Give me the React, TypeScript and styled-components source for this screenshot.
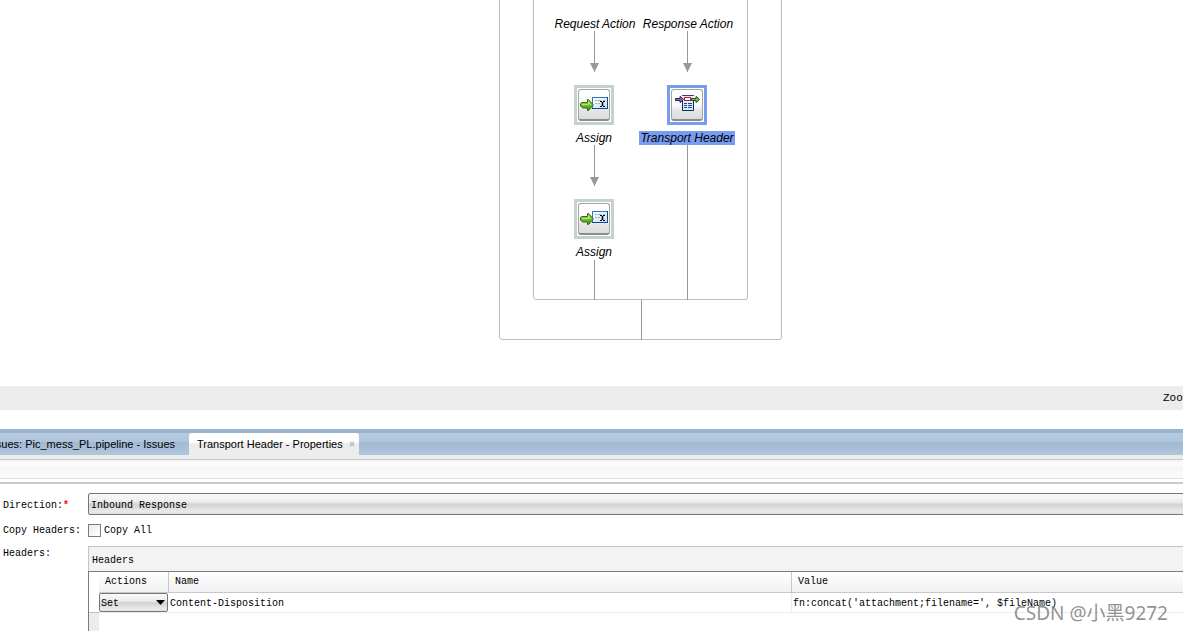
import React from "react";
import styled, { createGlobalStyle } from "styled-components";

const GlobalStyle = createGlobalStyle`
  * { box-sizing: border-box; }
  html, body { margin: 0; overflow: hidden; }
  body {
    background: #fff;
    color: #000;
    font: 10px/14px "Liberation Mono", "DejaVu Sans Mono", monospace;
  }
  input, select, button { font: inherit; color: inherit; margin: 0; }
`;

const Page = styled.div`
  display: flex;
  flex-direction: column;
  height: 100vh;
  min-height: 600px;
  overflow: hidden;
`;

/* Diagram */

const Canvas = styled.section`
  position: relative;
  flex: none;
  height: 386px;
  overflow: hidden;
`;

const Frame = styled.div<{ $x: number; $w: number; $h: number }>`
  position: absolute;
  top: -8px;
  left: ${(p) => p.$x}px;
  width: ${(p) => p.$w}px;
  height: ${(p) => p.$h + 8}px;
  border: 1px solid #bdbdbd;
  border-radius: 3px;
`;

const Connectors = styled.svg`
  position: absolute;
  top: 0;
  left: 0;
`;

const NodeLabel = styled.span<{ $x: number; $y: number; $selected?: boolean }>`
  position: absolute;
  left: ${(p) => p.$x}px;
  top: ${(p) => p.$y}px;
  transform: translateX(-50%);
  min-width: ${(p) => (p.$selected ? 96 : 0)}px;
  background: ${(p) => (p.$selected ? "#789cf0" : "transparent")};
  font: italic 12px/14px "Liberation Sans", Arial, sans-serif;
  text-align: center;
  white-space: nowrap;
`;

const NodeButton = styled.button<{ $x: number; $y: number; $selected?: boolean }>`
  position: absolute;
  left: ${(p) => p.$x}px;
  top: ${(p) => p.$y}px;
  width: 40px;
  height: 40px;
  padding: 1px;
  border: 3px solid ${(p) => (p.$selected ? "#789cf0" : "#c4d1cf")};
  background: #fff;
`;

const NodeFace = styled.span`
  display: block;
  width: 32px;
  height: 32px;
  border: 1px solid #a3a3a3;
  border-bottom: 2px solid #8c8c8c;
  border-radius: 3px;
  background: linear-gradient(#fff 0%, #fafafa 55%, #e6e6e6 68%, #dcdcdc 100%);
`;

const Icon = styled.svg`
  display: block;
`;

/* Bars */

const ZoomBar = styled.div`
  display: flex;
  flex: none;
  justify-content: flex-end;
  height: 24px;
  margin-bottom: 19px;
  padding-top: 5px;
  overflow: hidden;
  background: #ececec;
  font-size: 11px;
`;

const ZoomLabel = styled.span`
  width: 20px;
  white-space: nowrap;
`;

const Tabs = styled.nav`
  display: flex;
  flex: none;
  height: 26px;
  border-top: 4px solid #98b4d1;
  background: linear-gradient(#b8cce1 0, #afc5dc 9px, #a0bad4 9px, #b0c6db 100%);
  font: 11px/22px "Liberation Sans", Arial, sans-serif;
`;

const Tab = styled.button<{ $active?: boolean }>`
  display: flex;
  flex: none;
  justify-content: ${(p) => (p.$active ? "flex-start" : "flex-end")};
  gap: 6px;
  width: ${(p) => (p.$active ? 170 : 189)}px;
  padding: ${(p) => (p.$active ? "0 4px 0 8px" : "0 14px 0 0")};
  border: 0;
  border-radius: 3px 3px 0 0;
  background: ${(p) =>
    p.$active ? "linear-gradient(#fff 0, #fff 10px, #ececec 10px, #ececec 100%)" : "none"};
  white-space: nowrap;
`;

const CloseIcon = styled.svg`
  flex: none;
  margin-top: 8px;
`;

const Toolbar = styled.div`
  flex: none;
  height: 29px;
  border-top: 4px solid #ececec;
  border-bottom: 2px solid #cacaca;
  background: linear-gradient(
    #c9c9c9 0, #c9c9c9 1px, #eee 1px, #fbfbfb 3px, #fbfbfb 7px,
    #f4f4f4 9px, #fafafa 12px, #fafafa 19px, #e2e2e2 19px, #e2e2e2 20px, #fff 20px
  );
`;

/* Form */

const Form = styled.form`
  display: flex;
  flex: 1;
  flex-direction: column;
  min-height: 0;
  padding-top: 9px;
`;

const Row = styled.div<{ $gap?: number }>`
  display: flex;
  align-items: ${(p) => (p.$gap ? "center" : "stretch")};
  margin-bottom: ${(p) => p.$gap || 0}px;
  flex: ${(p) => (p.$gap ? "none" : "1")};
`;

const FieldLabel = styled.label`
  flex: none;
  width: 88px;
  padding: 4px 0 0 3px;
  white-space: nowrap;
`;

const GroupLabel = styled.span`
  flex: none;
  width: 88px;
  padding: 1px 0 0 3px;
  white-space: nowrap;
`;

const Required = styled.b`
  color: #f00;
`;

const Select = styled.select<{ $cell?: boolean }>`
  display: block;
  appearance: none;
  flex: 1;
  width: 100%;
  height: ${(p) => (p.$cell ? 19 : 22)}px;
  padding: ${(p) => (p.$cell ? "2px 0 0 1px" : "4px 0 0 2px")};
  margin-right: ${(p) => (p.$cell ? 0 : -4)}px;
  border: 1px solid #767676;
  border-radius: 2px;
  outline: 0;
  background: linear-gradient(#fafafa 0%, #ececec 40%, #d2d2d2 52%, #ebebeb 90%, #dcdcdc 100%);
`;

const CheckLabel = styled.label`
  display: flex;
  align-items: center;
  gap: 3px;
`;

const Checkbox = styled.input`
  appearance: none;
  width: 13px;
  height: 13px;
  border: 1px solid #7c7c7c;
  background: linear-gradient(135deg, #eaeaea, #fff);
`;

const Panel = styled.div`
  flex: 1;
  min-width: 0;
  display: flex;
  flex-direction: column;
  border-top: 1px solid #c4c4c4;
`;

const PanelTitle = styled.div`
  height: 24px;
  padding: 7px 3px 0;
  border-left: 1px solid #c4c4c4;
  background: #f3f3f3;
`;

const PanelBody = styled.div`
  flex: 1;
  border-top: 1px solid #7b7b7b;
  border-left: 1px solid #7b7b7b;
  background: linear-gradient(90deg, #ececec 10px, #fff 10px);
`;

const Table = styled.table`
  width: 100%;
  table-layout: fixed;
  border-collapse: separate;
  border-spacing: 0;
`;

const Col = styled.col<{ $w?: number }>`
  width: ${(p) => (p.$w ? `${p.$w}px` : "auto")};
`;

const Th = styled.th<{ $line?: boolean }>`
  height: 21px;
  padding: 0 6px;
  border-bottom: 1px solid #c8c8c8;
  border-right: ${(p) => (p.$line ? "1px solid #c8c8c8" : "0")};
  background: linear-gradient(#fff, #f1f1f1);
  font-weight: 400;
  text-align: left;
`;

const Gutter = styled.td<{ $last?: boolean }>`
  padding: 0;
  border-bottom: ${(p) => (p.$last ? "1px solid #bdbdbd" : "0")};
  background: #fff;
`;

const Td = styled.td<{ $line?: boolean }>`
  height: 20px;
  padding: 2px 1px 0;
  border-bottom: 1px solid #ebebeb;
  border-right: ${(p) => (p.$line ? "1px solid #ebebeb" : "0")};
  background: #fff;
  white-space: nowrap;
`;

const ActionCell = styled(Td)`
  position: relative;
  padding: 0 1px 0 0;
`;

const Caret = styled.svg`
  position: absolute;
  top: 7px;
  right: 4px;
  pointer-events: none;
`;

const Watermark = styled.div`
  position: absolute;
  right: 15px;
  bottom: 4px;
  color: rgba(110, 110, 110, 0.75);
  font: 400 19px/28px "Noto Sans", "Noto Sans CJK SC", sans-serif;
  pointer-events: none;
`;

function AssignIcon() {
  return (
    <Icon width="30" height="29" viewBox="0 0 30 29" aria-hidden="true">
      <defs>
        <linearGradient id="leaf" x1="0" y1="0" x2="0" y2="1">
          <stop offset="0" stopColor="#a4e04c" />
          <stop offset="1" stopColor="#399c0c" />
        </linearGradient>
        <linearGradient id="sheet" x1="0" y1="0" x2="1" y2="1">
          <stop offset="0" stopColor="#fff" />
          <stop offset="1" stopColor="#c3dff6" />
        </linearGradient>
      </defs>
      <rect x="13.5" y="7.5" width="15" height="11" fill="url(#sheet)" stroke="#2a78c4" />
      <path d="M13 18.500h15.500V7" fill="none" stroke="#0d4a8c" />
      <path d="M16 10.500h2M19 10.500h3M24 10.500h2M16 13.500h2M19 13.500h2" stroke="#a3adb8" />
      <path d="M21 11.500h2M24 11.500h2M21 16.500h2M24 16.500h2" stroke="#000" />
      <path d="M23.500 12v4" stroke="#000" strokeWidth="1.600" />
      <path d="M1.500 13.500l1-1h6v-3h1l4.500 5v1l-4.500 5h-1v-2.500h-5l-2-2z" fill="url(#leaf)" stroke="#34661e" />
      <path d="M3 14.500h6.500v-2.500l2.500 3" fill="none" stroke="#b8e879" />
    </Icon>
  );
}

function HeaderIcon() {
  return (
    <Icon width="30" height="29" viewBox="0 0 30 29" aria-hidden="true">
      <rect x="11" y="6" width="10" height="15" fill="#dcebfa" />
      <path d="M10 5.500h12" stroke="#1c4c8c" />
      <path d="M10.500 11v9.500h11V11" fill="none" stroke="#0c2c60" />
      <path d="M12 13.500h3M16 13.500h4M12 15.500h3M16 15.500h4M12 17.500h3M16 17.500h4" stroke="#164c91" />
      <path d="M3.500 8.500v2h4.500v2h.500l3-3-3-3h-.500v2z" fill="#8263ad" stroke="#392456" />
      <path d="M19.500 8.500v2h4.500v2h.500l3-3-3-3h-.500v2z" fill="#75c528" stroke="#33442a" />
      <rect x="12.500" y="7.500" width="6" height="3" fill="#fff" stroke="#d4143b" />
    </Icon>
  );
}

export default function App() {
  return (
    <Page>
      <GlobalStyle />
      <Canvas aria-label="Message flow">
        <Frame $x={499} $w={283} $h={340} />
        <Frame $x={533} $w={215} $h={300} />
        <Connectors width="800" height="350" aria-hidden="true">
          <path
            d="M594.500 31v41M594.500 145v41M594.500 260v40M687.500 31v41M687.500 145v155M641.500 300v40"
            stroke="#979797"
          />
          <path d="M590 63h9l-4 8h-1zM590 177h9l-4 8h-1zM683 63h9l-4 8h-1z" fill="#979797" />
        </Connectors>
        <NodeLabel $x={595} $y={17}>Request Action</NodeLabel>
        <NodeLabel $x={688} $y={17}>Response Action</NodeLabel>
        <NodeButton $x={574} $y={85} aria-label="Assign">
          <NodeFace><AssignIcon /></NodeFace>
        </NodeButton>
        <NodeLabel $x={594} $y={131}>Assign</NodeLabel>
        <NodeButton $x={574} $y={199} aria-label="Assign">
          <NodeFace><AssignIcon /></NodeFace>
        </NodeButton>
        <NodeLabel $x={594} $y={245}>Assign</NodeLabel>
        <NodeButton $x={667} $y={85} $selected aria-label="Transport Header">
          <NodeFace><HeaderIcon /></NodeFace>
        </NodeButton>
        <NodeLabel $x={687} $y={131} $selected>Transport Header</NodeLabel>
      </Canvas>

      <ZoomBar><ZoomLabel>Zoom:</ZoomLabel></ZoomBar>

      <Tabs>
        <Tab type="button">Issues: Pic_mess_PL.pipeline - Issues</Tab>
        <Tab type="button" $active>
          Transport Header - Properties
          <CloseIcon width="6" height="6" viewBox="0 0 6 6" aria-hidden="true">
            <path d="M1 1l4 4M5 1L1 5" stroke="#b9b9b9" strokeWidth="1.500" />
          </CloseIcon>
        </Tab>
      </Tabs>
      <Toolbar />

      <Form>
        <Row $gap={8}>
          <FieldLabel htmlFor="direction">Direction:<Required>*</Required></FieldLabel>
          <Select id="direction" defaultValue="in">
            <option value="in">Inbound Response</option>
          </Select>
        </Row>
        <Row $gap={8}>
          <GroupLabel>Copy Headers:</GroupLabel>
          <CheckLabel><Checkbox type="checkbox" />Copy All</CheckLabel>
        </Row>
        <Row>
          <GroupLabel>Headers:</GroupLabel>
          <Panel>
            <PanelTitle>Headers</PanelTitle>
            <PanelBody>
              <Table>
                <colgroup>
                  <Col $w={10} />
                  <Col $w={70} />
                  <Col $w={623} />
                  <Col />
                </colgroup>
                <thead>
                  <tr>
                    <Gutter />
                    <Th $line>Actions</Th>
                    <Th $line>Name</Th>
                    <Th>Value</Th>
                  </tr>
                </thead>
                <tbody>
                  <tr>
                    <Gutter $last />
                    <ActionCell>
                      <Select $cell aria-label="Action" defaultValue="set">
                        <option value="set">Set</option>
                      </Select>
                      <Caret width="9" height="5" viewBox="0 0 9 5" aria-hidden="true">
                        <path d="M0 0h9L4.500 5z" />
                      </Caret>
                    </ActionCell>
                    <Td $line>Content-Disposition</Td>
                    <Td>fn:concat('attachment;filename=', $fileName)</Td>
                  </tr>
                </tbody>
              </Table>
            </PanelBody>
          </Panel>
        </Row>
      </Form>
      <Watermark>CSDN @小黑9272</Watermark>
    </Page>
  );
}
